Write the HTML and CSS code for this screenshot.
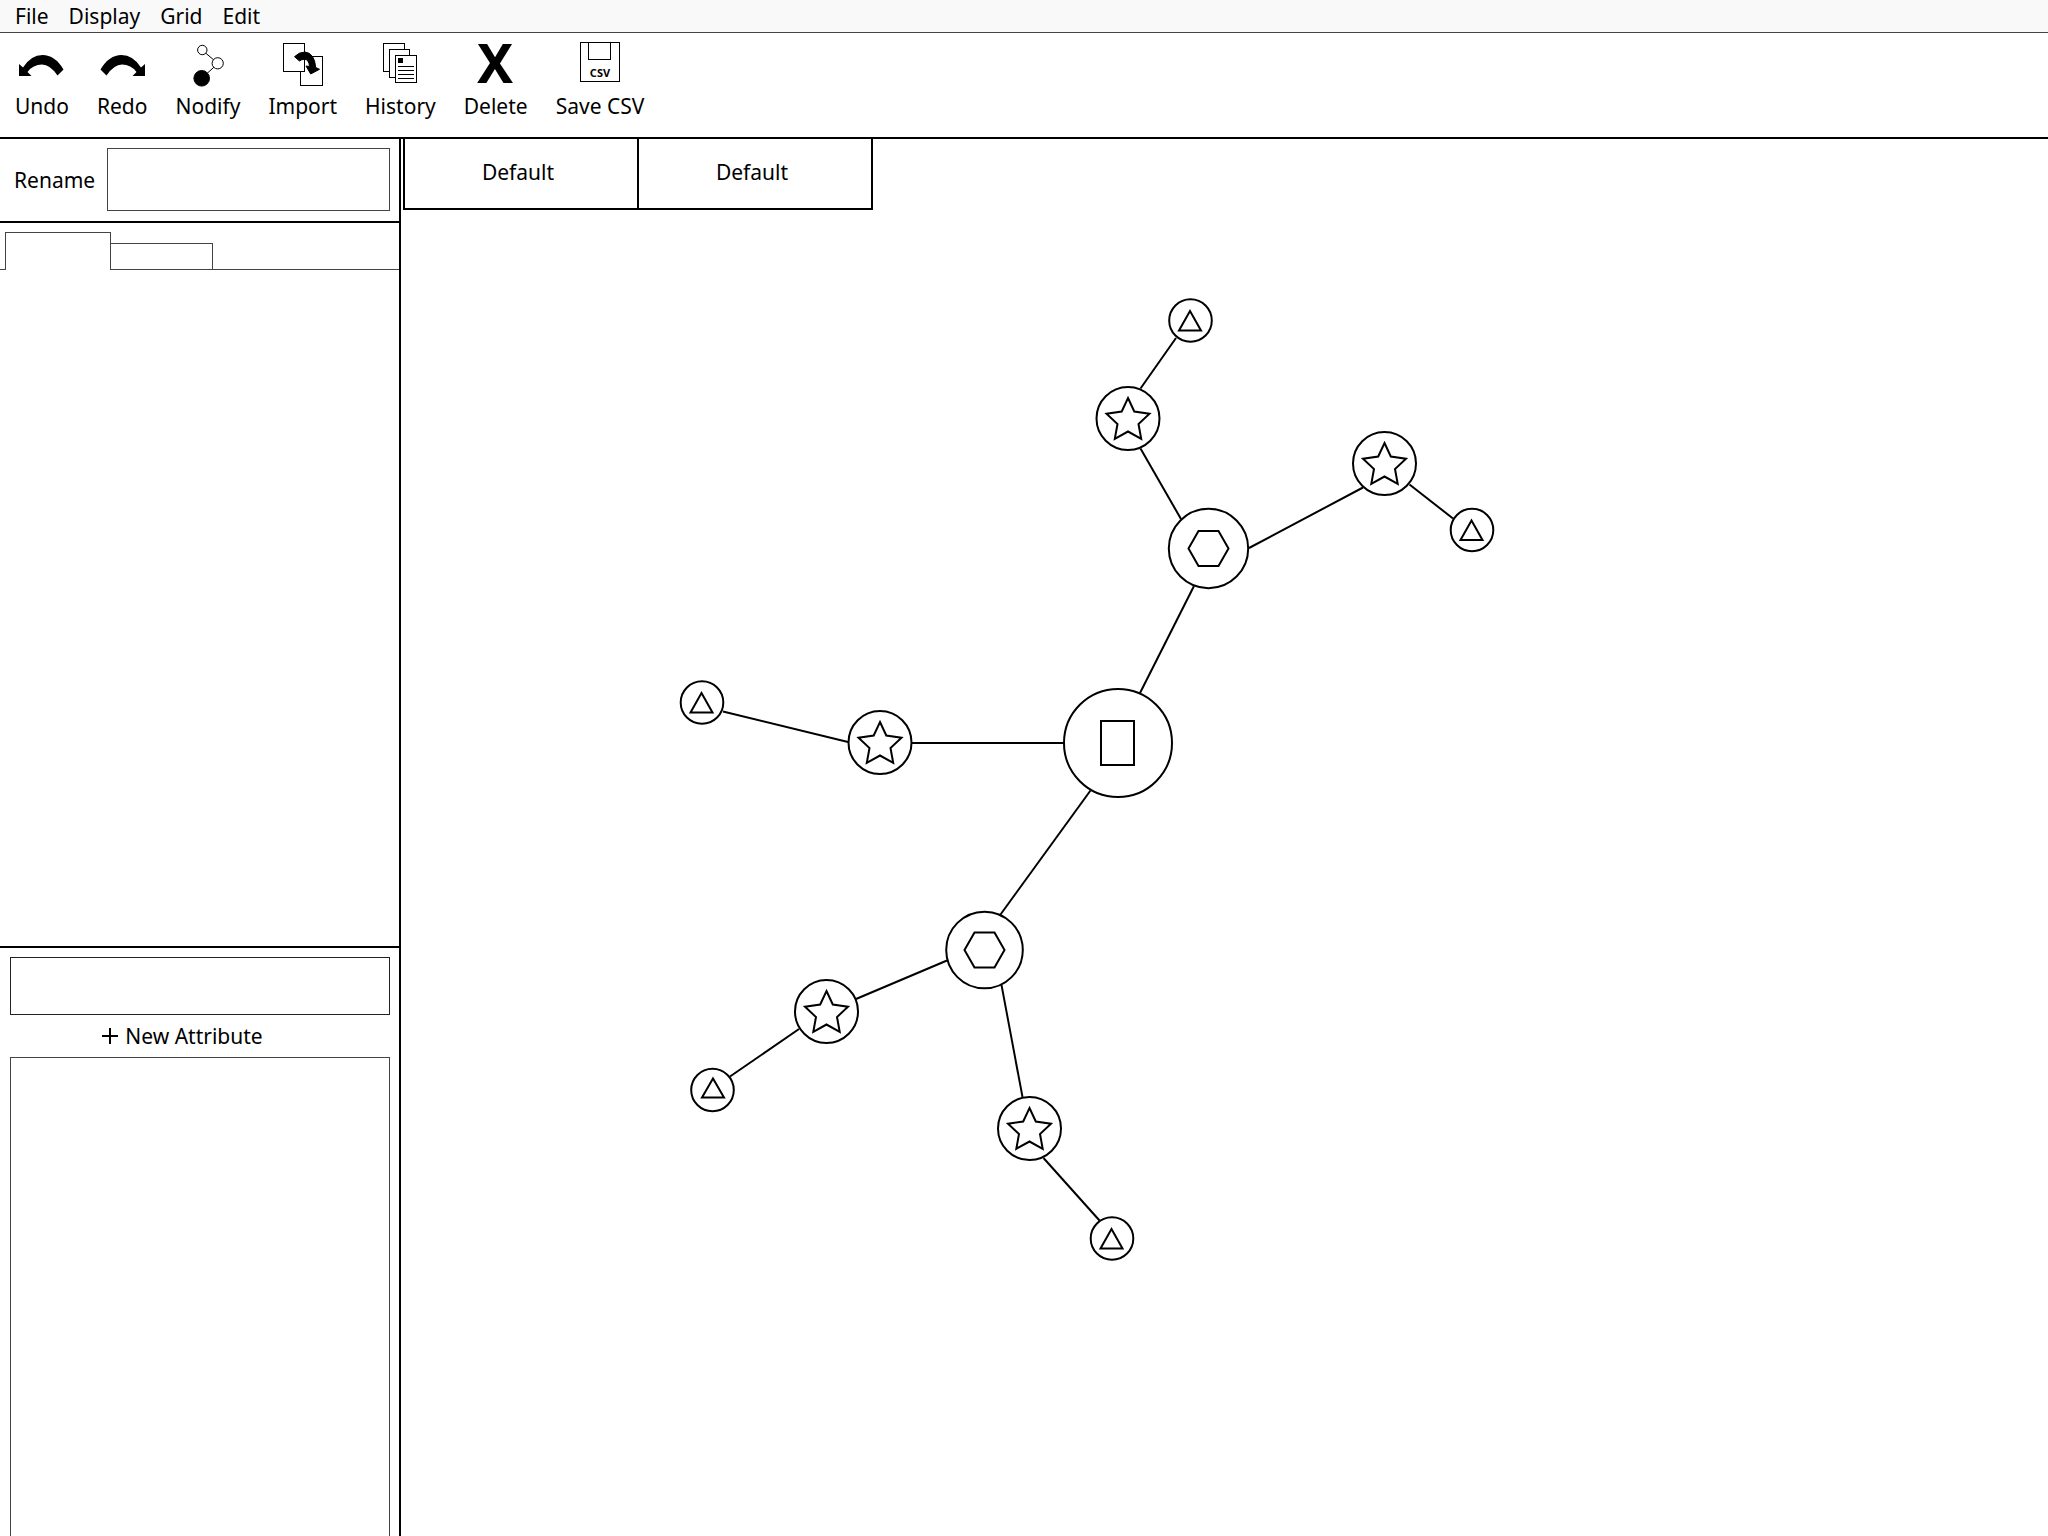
FILE: index.html
```
<!DOCTYPE html>
<html lang="en">
<head>
    <meta charset="UTF-8">
    <meta name="viewport" content="width=device-width, initial-scale=1.0">
    <title>Node Editor</title>
    <link rel="stylesheet" href="styles.css">
</head>
<body>

<nav class="menubar">
    <button>File</button>
    <button>Display</button>
    <button>Grid</button>
    <button>Edit</button>
</nav>

<header class="toolbar">
    <button class="tool">
        <svg class="icon" viewBox="0 0 48 48" aria-hidden="true">
            <path d="M1 36V24L5 27.5Q13 15 24.5 15Q37 15 45.5 29.5L39.5 35.5Q32 24.5 24 24.5Q15 24.5 9.5 32L13.5 36Z"/>
        </svg>
        <span>Undo</span>
    </button>
    <button class="tool">
        <svg class="icon" viewBox="0 0 48 48" aria-hidden="true">
            <path d="M47 36V24L43 27.5Q35 15 23.5 15Q11 15 2.5 29.5L8.500 35.5Q16 24.5 24 24.5Q33 24.5 38.500 32L34.500 36Z"/>
        </svg>
        <span>Redo</span>
    </button>
    <button class="tool">
        <svg class="icon outline" viewBox="0 0 48 48" aria-hidden="true">
            <path d="M18 10L34 23.500L18 38"/>
            <circle cx="18.300" cy="10" r="4.700"/>
            <circle cx="33.700" cy="23.300" r="5.600"/>
            <circle class="solid" cx="17.700" cy="38.300" r="7.800"/>
        </svg>
        <span>Nodify</span>
    </button>
    <button class="tool">
        <svg class="icon outline" viewBox="0 0 48 48" aria-hidden="true">
            <rect x="21.500" y="16.500" width="22" height="29"/>
            <rect x="4.500" y="3.500" width="21" height="28"/>
            <path class="solid" d="M15.500 16.700Q20 12 26 12Q35.500 13 36.700 27.500L40.500 29.300L31.700 34L27 26L30.500 26.500Q30 19.500 25.500 19.300Q22.500 19.300 20.500 21Z"/>
        </svg>
        <span>Import</span>
    </button>
    <button class="tool">
        <svg class="icon outline" viewBox="0 0 48 48" aria-hidden="true">
            <rect x="7.500" y="3.500" width="21" height="28"/>
            <rect x="13.500" y="9.500" width="20" height="28"/>
            <rect x="19.500" y="15.500" width="21" height="27"/>
            <rect class="solid" x="22.500" y="18.500" width="4" height="4"/>
            <path d="M22 26.500H38M22 30.500H38M22 34.500H38M22 38.500H38"/>
        </svg>
        <span>History</span>
    </button>
    <button class="tool">
        <svg class="icon" viewBox="0 0 48 48" aria-hidden="true">
            <text class="cross" x="23" y="43">X</text>
        </svg>
        <span>Delete</span>
    </button>
    <button class="tool">
        <svg class="icon outline" viewBox="0 0 48 48" aria-hidden="true">
            <rect x="4.500" y="2.500" width="39" height="39"/>
            <rect x="12.500" y="2.500" width="22" height="17"/>
            <text class="disk-label" x="24" y="37">CSV</text>
        </svg>
        <span>Save CSV</span>
    </button>
</header>

<main class="workspace">
    <aside class="sidebar">
        <div class="rename">
            <label for="rename">Rename</label>
            <input type="text" id="rename">
        </div>

        <section class="panel">
            <div class="panel-tabs">
                <button class="panel-tab active" aria-label="Tab 1"></button>
                <button class="panel-tab" aria-label="Tab 2"></button>
            </div>
        </section>

        <section class="attributes">
            <input type="text" id="attribute" aria-label="Attribute">
            <button class="new-attribute">
                <svg class="plus" viewBox="0 0 18 18" aria-hidden="true"><path d="M9 1V17M1 9H17"/></svg>
                New Attribute
            </button>
            <div class="attribute-list"></div>
        </section>
    </aside>

    <section class="canvas">
        <nav class="canvas-tabs">
            <button>Default</button>
            <button>Default</button>
        </nav>

        <svg class="graph" role="img" aria-label="Node graph">
            <defs>
                <g id="leaf">
                    <circle r="21.300"/>
                    <path d="M-0.500 -9.500L10.500 10H-11.500Z"/>
                </g>
                <g id="star">
                    <circle r="31.500"/>
                    <path d="M0 -20.500L6.300 -7L21.500 -4.700L10.500 5.500L13.200 20.300L0 13L-13.200 20.300L-10.500 5.500L-21.500 -4.700L-6.300 -7Z"/>
                </g>
                <path id="hexagon" d="M-10 -17.500H10L20 0L10 17.500H-10L-20 0Z"/>
            </defs>

            <!-- links -->
            <path d="M775 128L739.500 178.500"/>
            <path d="M739.500 238.500L780 309"/>
            <path d="M848 338L962 277.500"/>
            <path d="M1008.500 274.500L1052 308.500"/>
            <path d="M793 376L739 483"/>
            <path d="M322 501.500L447 532"/>
            <path d="M511 533H662.500"/>
            <path d="M689.500 580.500L599.500 704.500"/>
            <path d="M546 750.500L455 789"/>
            <path d="M398 819L329 866.500"/>
            <path d="M600.500 775L621.500 887"/>
            <path d="M642.500 948L698.500 1010.500"/>

            <!-- root -->
            <circle cx="717" cy="533" r="54"/>
            <rect x="700" y="511" width="33" height="44"/>

            <!-- groups -->
            <circle cx="807.500" cy="338.500" r="39.700"/>
            <use href="#hexagon" x="807.500" y="338.500"/>
            <circle cx="583.500" cy="740" r="38.300"/>
            <use href="#hexagon" x="583.500" y="740"/>

            <!-- stars -->
            <use href="#star" x="727" y="208.500"/>
            <use href="#star" x="983.500" y="253.500"/>
            <use href="#star" x="479" y="532.500"/>
            <use href="#star" x="425.500" y="801.500"/>
            <use href="#star" x="628.500" y="918.500"/>

            <!-- leaves -->
            <use href="#leaf" x="789.500" y="110.500"/>
            <use href="#leaf" x="1071" y="320"/>
            <use href="#leaf" x="301" y="492.500"/>
            <use href="#leaf" x="711" y="1028.500"/>
            <circle cx="311.500" cy="880" r="21.300"/>
            <path d="M312 868.500L323 887.500H301Z"/>
        </svg>
    </section>
</main>

</body>
</html>
```

FILE: styles.css
```
* {
    margin: 0;
    padding: 0;
    box-sizing: border-box;
}

body {
    font-family: 'Noto Sans', 'Open Sans', sans-serif;
    font-size: 21px;
    line-height: 28px;
    background-color: #fff;
    color: #000;
    display: flex;
    flex-direction: column;
    height: 100vh;
    overflow: hidden;
}

button {
    font: inherit;
    color: inherit;
    background: none;
    border: none;
    cursor: pointer;
}

input {
    font: inherit;
    padding: 0 12px;
    border: 1px solid #444;
    min-width: 0;
}

.menubar {
    display: flex;
    gap: 20px;
    padding: 2px 15px;
    background-color: #f9f9f9;
    border-bottom: 1px solid #444;
}

.toolbar {
    display: flex;
    gap: 28px;
    padding: 7px 15px 17px;
    border-bottom: 2px solid #000;
}

.tool {
    display: flex;
    flex-direction: column;
    align-items: center;
    gap: 4px;
}

.icon {
    width: 48px;
    height: 48px;
}

.outline {
    fill: #fff;
    stroke: #000;
    stroke-width: 1;
}

.outline .solid {
    fill: #000;
}

.cross {
    font-size: 54px;
    font-weight: bold;
    text-anchor: middle;
}

.disk-label {
    font-size: 11px;
    font-weight: bold;
    text-anchor: middle;
    fill: #000;
    stroke: none;
}

.workspace {
    display: flex;
    flex: 1;
    min-height: 0;
}

.sidebar {
    display: flex;
    flex-direction: column;
    width: 401px;
    border-right: 2px solid #000;
}

.rename {
    display: flex;
    align-items: center;
    gap: 12px;
    padding: 9px 9px 10px 14px;
    border-bottom: 2px solid #000;
}

.rename input {
    flex: 1;
    height: 63px;
}

.panel {
    flex: 5 1 0;
    border-bottom: 2px solid #000;
}

.panel-tabs {
    display: flex;
    align-items: flex-end;
    padding-top: 9px;
}

/* the baseline runs on both sides of the open tab */
.panel-tabs::before,
.panel-tabs::after {
    content: '';
    width: 5px;
    border-bottom: 1px solid #444;
}

.panel-tabs::after {
    flex: 1;
}

.panel-tab {
    width: 102px;
    height: 27px;
    border: 1px solid #444;
    border-left: none;
}

.panel-tab.active {
    width: 106px;
    height: 38px;
    border-left: 1px solid #444;
    border-bottom: none;
}

.attributes {
    flex: 4 1 0;
    display: flex;
    flex-direction: column;
    padding: 9px 9px 0 10px;
}

.attributes input {
    height: 58px;
    border-color: #222;
}

.new-attribute {
    display: flex;
    justify-content: center;
    align-items: center;
    gap: 6px;
    padding: 7px 36px 7px 0;
}

.plus {
    width: 18px;
    height: 18px;
    stroke: #000;
    stroke-width: 2;
}

.attribute-list {
    flex: 1;
    border: 1px solid #444;
    border-bottom: none;
}

.canvas {
    flex: 1;
    display: flex;
    flex-direction: column;
    min-width: 0;
}

.canvas-tabs {
    display: flex;
    padding-left: 2px;
}

.canvas-tabs button {
    width: 234px;
    height: 71px;
    padding: 0 6px 4px 0;
    border-left: 2px solid #000;
    border-bottom: 2px solid #000;
}

.canvas-tabs button:last-child {
    width: 236px;
    border-right: 2px solid #000;
}

.graph {
    flex: 1;
    width: 100%;
    fill: none;
    stroke: #000;
    stroke-width: 2;
}
```
